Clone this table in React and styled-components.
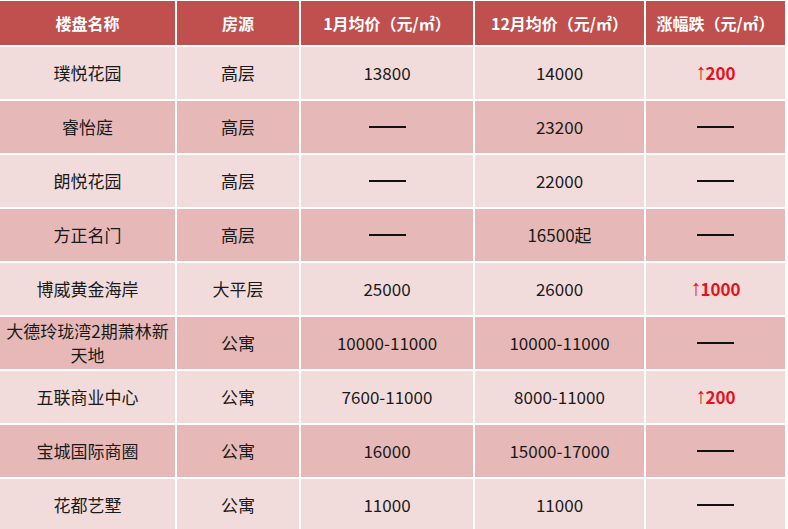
import React from "react";
import styled, { createGlobalStyle } from "styled-components";

const Global = createGlobalStyle`
  html, body { margin: 0; padding: 0; background: #ffffff; }
  body { font-family: "Microsoft YaHei", "Noto Sans CJK SC", "Noto Sans", sans-serif; }
`;

const Table = styled.div`
  display: grid;
  grid-template-columns: 175px 122px 172px 169px 139px;
  grid-auto-rows: 52px;
  grid-template-rows: 44px;
  gap: 2px;
  width: 785px;
  padding-top: 1px;
  background: #ffffff;
`;

const HeadCell = styled.div`
  background: #c0504d;
  color: #ffffff;
  font-weight: 700;
  font-size: 16px;
  display: flex;
  align-items: center;
  justify-content: center;
  white-space: nowrap;
`;

const Cell = styled.div`
  background: ${(p) => (p.$alt ? "#e6b9b8" : "#f2dcdb")};
  color: #1a1a1a;
  font-size: 17px;
  line-height: 24px;
  display: flex;
  align-items: center;
  justify-content: center;
  text-align: center;
  padding: 0 3px;
`;

const Dash = styled.span`
  display: inline-block;
  width: 37px;
  height: 1.5px;
  background: #111;
`;

const Up = styled.span`
  color: #e8101a;
  font-weight: 700;
  font-size: 17px;
  display: inline-flex;
  align-items: center;
`;

const Arrow = styled.span`
  font-family: "Liberation Sans", "DejaVu Sans", sans-serif;
  font-weight: 400;
  font-size: 22px;
  line-height: 1;
  margin-right: -1px;
  transform: translateY(-1px);
`;

const rows = [
  ["璞悦花园", "高层", "13800", "14000", "+200"],
  ["睿怡庭", "高层", "-", "23200", "-"],
  ["朗悦花园", "高层", "-", "22000", "-"],
  ["方正名门", "高层", "-", "16500起", "-"],
  ["博威黄金海岸", "大平层", "25000", "26000", "+1000"],
  ["大德玲珑湾2期萧林新天地", "公寓", "10000-11000", "10000-11000", "-"],
  ["五联商业中心", "公寓", "7600-11000", "8000-11000", "+200"],
  ["宝城国际商圈", "公寓", "16000", "15000-17000", "-"],
  ["花都艺墅", "公寓", "11000", "11000", "-"],
];

const render = (v) => {
  if (v === "-") return <Dash />;
  if (v.startsWith("+"))
    return (
      <Up>
        <Arrow>↑</Arrow>
        {v.slice(1)}
      </Up>
    );
  return v;
};

export default function App() {
  return (
    <>
      <Global />
      <Table>
        <HeadCell>楼盘名称</HeadCell>
        <HeadCell>房源</HeadCell>
        <HeadCell>1月均价（元/㎡）</HeadCell>
        <HeadCell>12月均价（元/㎡）</HeadCell>
        <HeadCell>涨幅跌（元/㎡）</HeadCell>
        {rows.map((r, i) =>
          r.map((v, j) => (
            <Cell key={i + "-" + j} $alt={i % 2 === 1}>
              {render(v)}
            </Cell>
          ))
        )}
      </Table>
    </>
  );
}
